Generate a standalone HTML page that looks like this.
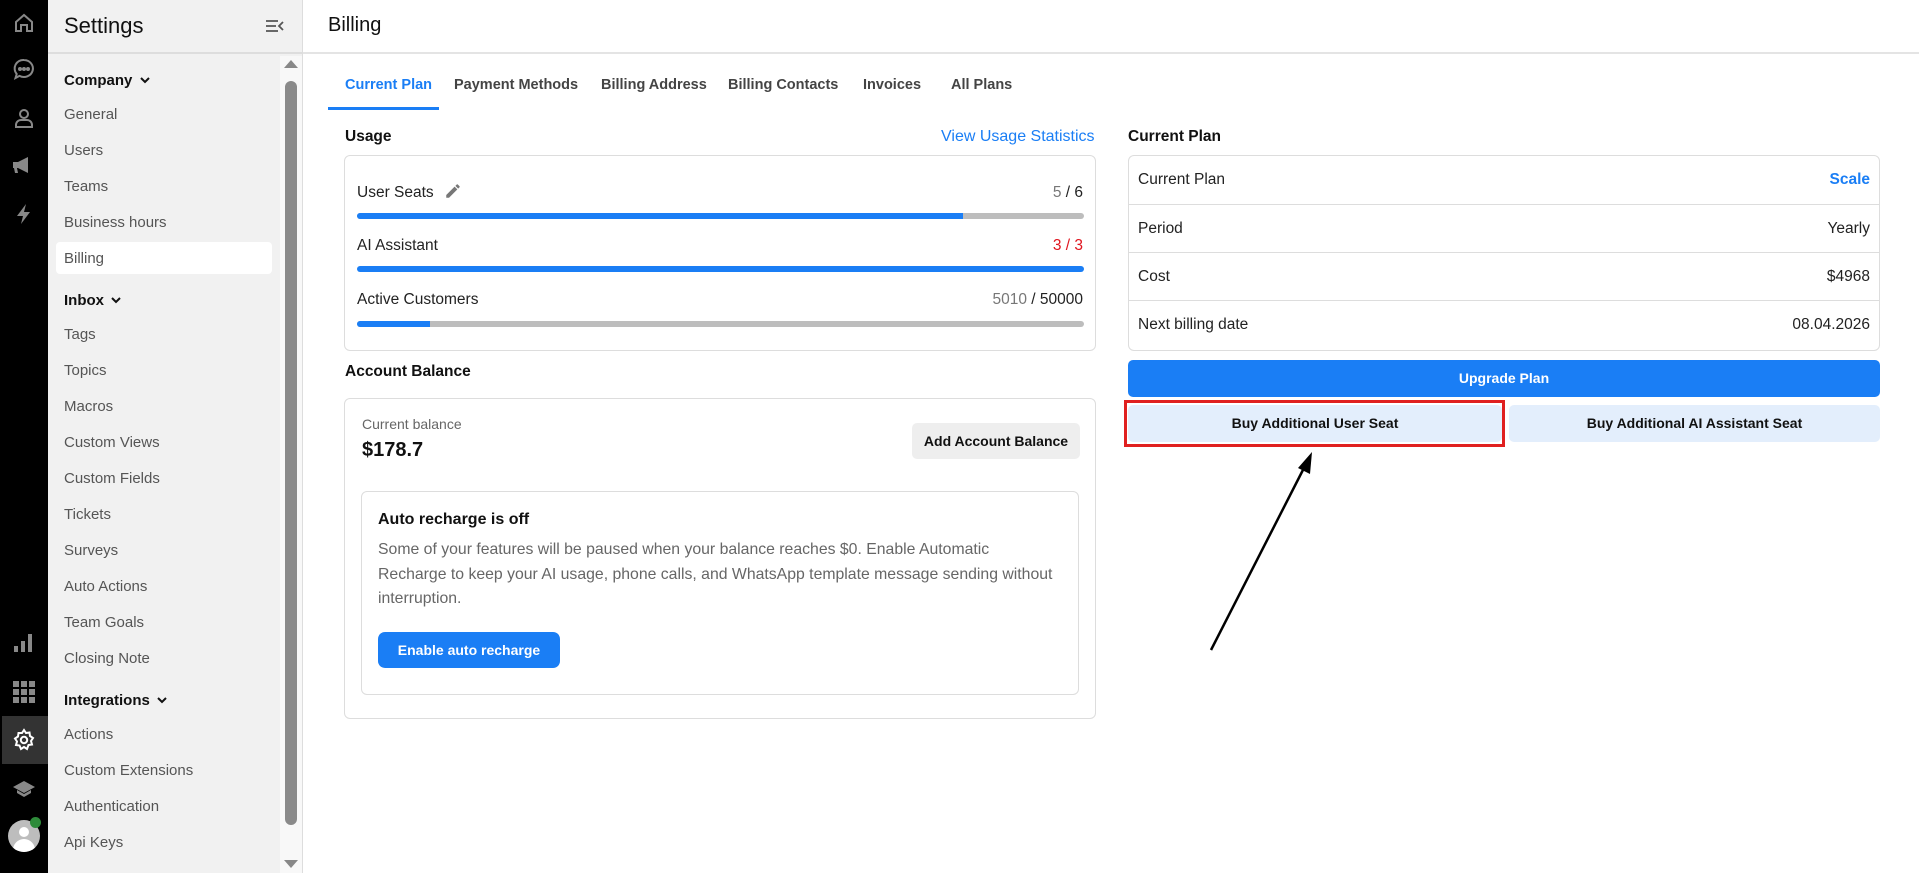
<!DOCTYPE html>
<html><head><meta charset="utf-8"><style>
*{box-sizing:border-box;margin:0;padding:0}
body{width:1919px;height:873px;overflow:hidden;font-family:"Liberation Sans",Arial,sans-serif;background:#fff;position:relative;color:#111}
.abs{position:absolute}
#rail{left:0;top:0;width:48px;height:873px;background:#000}
#rail svg{position:absolute;left:12px}
#side{left:48px;top:0;width:255px;height:873px;background:#f1f1f1;border-right:1px solid #ddd}
#side .hdr{position:absolute;left:0;top:0;width:254px;height:54px;border-bottom:2px solid #ddd}
.nav{position:absolute;left:16px;font-size:15px;color:#555}
.grp{position:absolute;left:16px;font-size:15px;color:#111;font-weight:bold}
.tab{position:absolute;top:77px;font-size:14.5px;font-weight:bold;color:#444}
.lbl{font-size:15.5px;color:#222}
.bar{position:absolute;left:12px;width:727px;height:6px;border-radius:3px;background:#bdbdbd;overflow:hidden}
.bar i{display:block;height:6px;background:#1a7ef5}
.row{position:absolute;left:0;width:100%;height:49px;border-top:1px solid #ddd;font-size:15.5px;color:#222}
.row span{position:absolute;top:15px}
.btn{position:absolute;border-radius:5px;font-size:14px;font-weight:bold;text-align:center}
</style></head><body>
<div id="rail" class="abs">
<svg style="top:11px" width="24" height="24" viewBox="0 0 24 24" fill="none" stroke="#888" stroke-width="2"><path d="M4 11 12 4l8 7v9h-5v-6H9v6H4z"/></svg>
<svg style="top:57px" width="24" height="24" viewBox="0 0 24 24" fill="none" stroke="#888" stroke-width="2"><path d="M12 3a9 8.5 0 1 1-4.5 15.9L3.5 21l1.2-4A8.5 8.5 0 0 1 12 3z"/><circle cx="8" cy="12" r="1" fill="#888"/><circle cx="12" cy="12" r="1" fill="#888"/><circle cx="16" cy="12" r="1" fill="#888"/></svg>
<svg style="top:106px" width="24" height="24" viewBox="0 0 24 24" fill="none" stroke="#888" stroke-width="2"><circle cx="12" cy="8" r="4"/><path d="M4 21v-2a5 5 0 0 1 5-5h6a5 5 0 0 1 5 5v2z"/></svg>
<svg style="top:153px" width="24" height="24" viewBox="0 0 24 24" fill="#888"><path d="M1 9h5l10-5v16L6 15H5l1 5H3l-1-5H1z"/></svg>
<svg style="top:202px" width="24" height="24" viewBox="0 0 24 24" fill="#888"><path d="M14 2 5 14h6l-2 8 9-12h-6z"/></svg>
<svg style="top:631px" width="24" height="24" viewBox="0 0 24 24" fill="#888"><rect x="2" y="15" width="4" height="6"/><rect x="9" y="10" width="4" height="11"/><rect x="16" y="3" width="4" height="18"/></svg>
<svg style="top:680px" width="24" height="24" viewBox="0 0 24 24" fill="#888"><rect x="1" y="1" width="6" height="6"/><rect x="9" y="1" width="6" height="6"/><rect x="17" y="1" width="6" height="6"/><rect x="1" y="9" width="6" height="6"/><rect x="9" y="9" width="6" height="6"/><rect x="17" y="9" width="6" height="6"/><rect x="1" y="17" width="6" height="6"/><rect x="9" y="17" width="6" height="6"/><rect x="17" y="17" width="6" height="6"/></svg>
<div class="abs" style="left:2px;top:716px;width:46px;height:48px;background:#333"></div>
<svg style="top:728px" width="24" height="24" viewBox="0 0 24 24" fill="none" stroke="#fff" stroke-width="2"><path d="M12 2l2 3 3.5-.5.5 3.5 3 2-2 3 1 3.5-3.5.5L15 21l-3-2-3 2-1.5-3.5L4 17l1-3.5-2-3 3-2L6.5 5 10 5z"/><circle cx="12" cy="12" r="3.2"/></svg>
<svg style="top:776px" width="24" height="24" viewBox="0 0 24 24" fill="#888"><path d="M12 5 1 11l11 6 11-6z"/><path d="M5 14v3l7 4 7-4v-3l-7 4z"/></svg>
<div class="abs" style="left:8px;top:820px;width:32px;height:32px;border-radius:50%;background:#bdbdbd;overflow:hidden"><div class="abs" style="left:11px;top:7px;width:10px;height:10px;border-radius:50%;background:#fff"></div><div class="abs" style="left:5px;top:19px;width:22px;height:14px;border-radius:11px 11px 0 0;background:#fff"></div></div>
<div class="abs" style="left:30px;top:817px;width:11px;height:11px;border-radius:50%;background:#2e8b3a"></div>
</div>
<div id="side" class="abs">
<div class="hdr"><div class="abs" style="left:16px;top:13px;font-size:22px;color:#111">Settings</div>
<svg class="abs" style="left:217px;top:18px" width="20" height="16" viewBox="0 0 20 16" fill="none" stroke="#555" stroke-width="1.8"><path d="M1 3h12M1 8h10M1 13h12M18 4l-4 4 4 4"/></svg></div>
<div class="grp" style="top:72px">Company <svg width="12" height="10" viewBox="0 0 12 10" style="margin-left:2px"><path d="M2 3l4 4 4-4" stroke="#111" stroke-width="2" fill="none"/></svg></div>
<div class="nav" style="top:106px">General</div>
<div class="nav" style="top:142px">Users</div>
<div class="nav" style="top:178px">Teams</div>
<div class="nav" style="top:214px">Business hours</div>
<div class="abs" style="left:8px;top:242px;width:216px;height:32px;background:#fff;border-radius:4px"></div>
<div class="nav" style="top:250px">Billing</div>
<div class="grp" style="top:292px">Inbox <svg width="12" height="10" viewBox="0 0 12 10" style="margin-left:2px"><path d="M2 3l4 4 4-4" stroke="#111" stroke-width="2" fill="none"/></svg></div>
<div class="nav" style="top:326px">Tags</div>
<div class="nav" style="top:362px">Topics</div>
<div class="nav" style="top:398px">Macros</div>
<div class="nav" style="top:434px">Custom Views</div>
<div class="nav" style="top:470px">Custom Fields</div>
<div class="nav" style="top:506px">Tickets</div>
<div class="nav" style="top:542px">Surveys</div>
<div class="nav" style="top:578px">Auto Actions</div>
<div class="nav" style="top:614px">Team Goals</div>
<div class="nav" style="top:650px">Closing Note</div>
<div class="grp" style="top:692px">Integrations <svg width="12" height="10" viewBox="0 0 12 10" style="margin-left:2px"><path d="M2 3l4 4 4-4" stroke="#111" stroke-width="2" fill="none"/></svg></div>
<div class="nav" style="top:726px">Actions</div>
<div class="nav" style="top:762px">Custom Extensions</div>
<div class="nav" style="top:798px">Authentication</div>
<div class="nav" style="top:834px">Api Keys</div>
<div class="abs" style="left:232px;top:56px;width:22px;height:817px;background:#f8f8f8"></div>
<div class="abs" style="left:236px;top:60px;width:0;height:0;border-left:7px solid transparent;border-right:7px solid transparent;border-bottom:8px solid #888"></div>
<div class="abs" style="left:237px;top:81px;width:12px;height:744px;border-radius:6px;background:#8a8a8a"></div>
<div class="abs" style="left:236px;top:860px;width:0;height:0;border-left:7px solid transparent;border-right:7px solid transparent;border-top:8px solid #888"></div>
</div>
<div class="abs" style="left:303px;top:0;width:1616px;height:54px;border-bottom:2px solid #e4e4e4"></div>
<div class="abs" style="left:328px;top:14px;font-size:20px;color:#111">Billing</div>
<div class="tab" style="left:345px;color:#1a7ef5">Current Plan</div>
<div class="tab" style="left:454px">Payment Methods</div>
<div class="tab" style="left:601px">Billing Address</div>
<div class="tab" style="left:728px">Billing Contacts</div>
<div class="tab" style="left:863px">Invoices</div>
<div class="tab" style="left:951px">All Plans</div>
<div class="abs" style="left:328px;top:107px;width:111px;height:3px;background:#1a7ef5"></div>

<div class="abs" style="left:345px;top:128px;font-size:15.5px;font-weight:bold">Usage</div>
<div class="abs" style="left:941px;top:128px;font-size:16px;color:#1a7ef5">View Usage Statistics</div>
<div class="abs" style="left:344px;top:155px;width:752px;height:196px;border:1px solid #ddd;border-radius:6px">
<div class="abs lbl" style="left:12px;top:26px">User Seats <svg style="vertical-align:-3px;margin-left:6px" width="18" height="18" viewBox="0 0 24 24" fill="#777"><path d="M3 17.3V21h3.7L17.8 9.9l-3.7-3.7zM20.7 7a1 1 0 0 0 0-1.4l-2.3-2.3a1 1 0 0 0-1.4 0l-1.8 1.8 3.7 3.7z"/></svg></div>
<div class="abs lbl" style="right:12px;top:28px"><span style="color:#777">5</span> / 6</div>
<div class="bar" style="top:57px"><i style="width:606px"></i></div>
<div class="abs lbl" style="left:12px;top:81px">AI Assistant</div>
<div class="abs lbl" style="right:12px;top:81px;color:#e0141e">3 / 3</div>
<div class="bar" style="top:110px"><i style="width:100%"></i></div>
<div class="abs lbl" style="left:12px;top:135px">Active Customers</div>
<div class="abs lbl" style="right:12px;top:135px"><span style="color:#777">5010</span> / 50000</div>
<div class="bar" style="top:165px"><i style="width:73px"></i></div>
</div>

<div class="abs" style="left:345px;top:363px;font-size:15.5px;font-weight:bold">Account Balance</div>
<div class="abs" style="left:344px;top:398px;width:752px;height:321px;border:1px solid #ddd;border-radius:6px">
<div class="abs" style="left:17px;top:17px;font-size:14px;color:#666">Current balance</div>
<div class="abs" style="left:17px;top:40px;font-size:20px;font-weight:bold">$178.7</div>
<div class="btn" style="left:567px;top:24px;width:168px;height:36px;background:#eee;line-height:36px;color:#111">Add Account Balance</div>
<div class="abs" style="left:16px;top:92px;width:718px;height:204px;border:1px solid #ddd;border-radius:6px">
<div class="abs" style="left:16px;top:19px;font-size:16px;font-weight:bold">Auto recharge is off</div>
<div class="abs" style="left:16px;top:46px;width:700px;font-size:15.8px;line-height:24.5px;color:#666;white-space:nowrap">Some of your features will be paused when your balance reaches $0. Enable Automatic<br>Recharge to keep your AI usage, phone calls, and WhatsApp template message sending without<br>interruption.</div>
<div class="btn" style="left:16px;top:140px;width:182px;height:36px;background:#1a7ef5;color:#fff;line-height:36px;border-radius:7px">Enable auto recharge</div>
</div></div>

<div class="abs" style="left:1128px;top:128px;font-size:15.5px;font-weight:bold">Current Plan</div>
<div class="abs" style="left:1128px;top:155px;width:752px;height:196px;border:1px solid #ddd;border-radius:6px;overflow:hidden">
<div class="row" style="top:0;border-top:none"><span style="left:9px">Current Plan</span><span style="right:9px;color:#1a7ef5;font-weight:bold">Scale</span></div>
<div class="row" style="top:48px"><span style="left:9px">Period</span><span style="right:9px">Yearly</span></div>
<div class="row" style="top:96px"><span style="left:9px">Cost</span><span style="right:9px">$4968</span></div>
<div class="row" style="top:144px"><span style="left:9px">Next billing date</span><span style="right:9px">08.04.2026</span></div>
</div>
<div class="btn" style="left:1128px;top:360px;width:752px;height:37px;background:#1a7ef5;color:#fff;line-height:37px">Upgrade Plan</div>
<div class="btn" style="left:1128px;top:405px;width:374px;height:37px;background:#e3eefc;line-height:37px">Buy Additional User Seat</div>
<div class="btn" style="left:1509px;top:405px;width:371px;height:37px;background:#e3eefc;line-height:37px">Buy Additional AI Assistant Seat</div>
<div class="abs" style="left:1124px;top:400px;width:381px;height:47px;border:3px solid #e02020"></div>
<svg class="abs" style="left:1190px;top:440px" width="140" height="220"><path d="M21 210 116 24" stroke="#000" stroke-width="2.5"/><path d="M122 12l-2 22-12-6z" fill="#000"/></svg>
</body></html>
